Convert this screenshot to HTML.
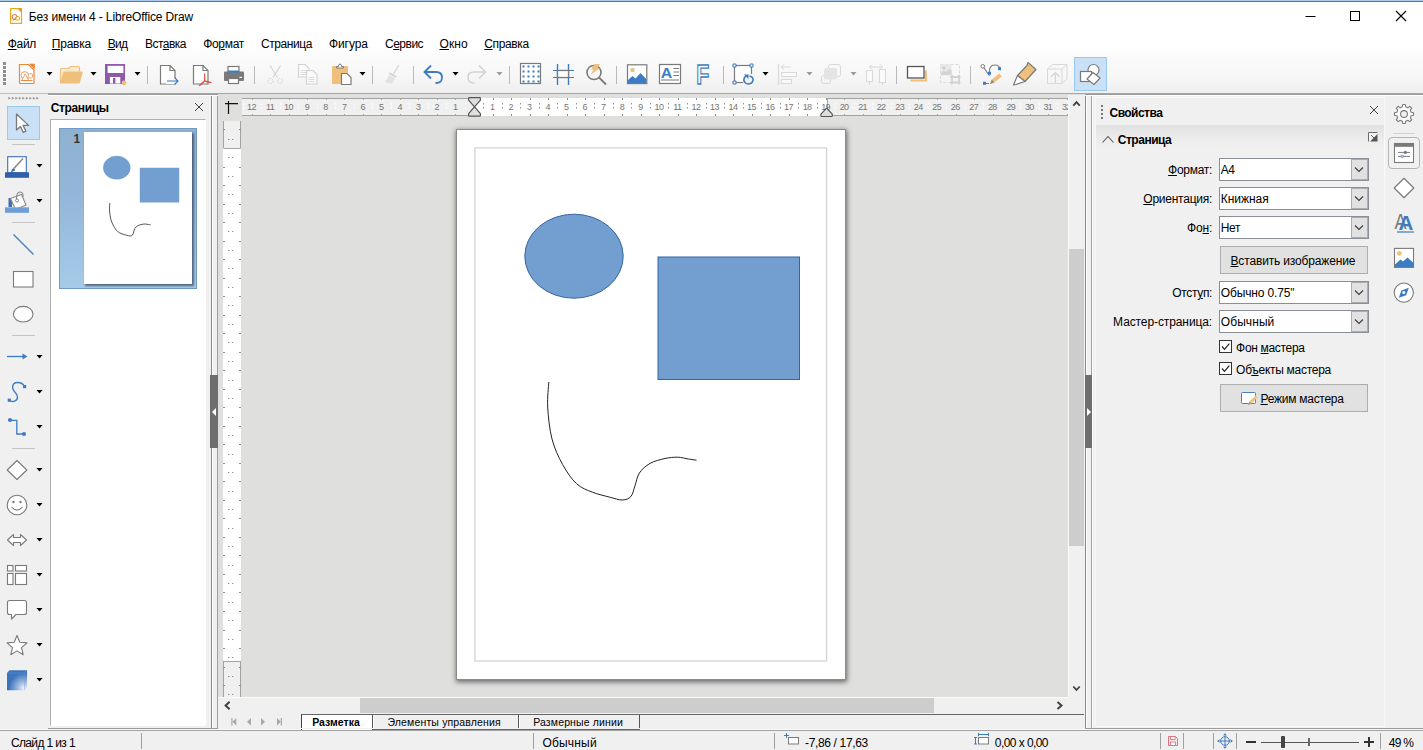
<!DOCTYPE html>
<html lang="ru"><head><meta charset="utf-8"><title>Без имени 4 - LibreOffice Draw</title>
<style>
html,body{margin:0;padding:0}
body{width:1423px;height:750px;overflow:hidden;position:relative;background:#f0f0f0;font-family:"Liberation Sans", sans-serif;font-size:12px;color:#000}
div,svg,span.t{position:absolute;box-sizing:border-box}
span.t{white-space:nowrap;display:block}
u{text-decoration:underline;text-underline-offset:1px;text-decoration-thickness:1px}
</style></head>
<body>
<div style="left:0px;top:0px;width:1423px;height:1px;background:#a9cbec"></div>
<div style="left:0px;top:1px;width:1423px;height:1px;background:#2f84d6"></div>
<div style="left:0px;top:2px;width:1423px;height:29px;background:#fff"></div>
<svg style="left:9px;top:7px" width="15" height="18" viewBox="0 0 15 18" ><path d="M1.600 1.600h7.400l3.500 3.500v11.200h-10.900z" fill="#fff" stroke="#e3ae1c" stroke-width="1.200" stroke-linejoin="round"/><path d="M8.600 1h4.400v4.400z" fill="#e3a019"/><circle cx="5.600" cy="10" r="2.500" fill="none" stroke="#e0653a" stroke-width="1"/><rect x="6.800" y="9.500" width="3.800" height="3.600" rx="1" fill="#fff" stroke="#e3ae1c" stroke-width="1"/><path d="M3.800 13.500l4.500-4" stroke="#e0653a" stroke-width=".9"/></svg>
<span class="t" id="t0" style="left:28.8px;top:10.84px;font-size:12px;line-height:12px;font-weight:400;color:#000;letter-spacing:-0.120px;">Без имени 4 - LibreOffice Draw</span>
<svg style="left:1300px;top:6px" width="120" height="22" viewBox="0 0 120 22" ><path d="M5.5 10.5h10" stroke="#000" stroke-width="1"/><rect x="50.5" y="5.5" width="9" height="9" fill="none" stroke="#000" stroke-width="1"/><path d="M96 5l10 10M106 5l-10 10" stroke="#000" stroke-width="1.1"/></svg>
<div style="left:0px;top:31px;width:1423px;height:25px;background:linear-gradient(#fff 0%,#fff 55%,#fbfbfb 100%)"></div>
<span class="t" id="t1" style="left:7.8px;top:37.84px;font-size:12px;line-height:12px;font-weight:400;color:#000;letter-spacing:-0.354px;"><u>Ф</u>айл</span>
<span class="t" id="t2" style="left:51.8px;top:37.84px;font-size:12px;line-height:12px;font-weight:400;color:#000;letter-spacing:-0.224px;"><u>П</u>равка</span>
<span class="t" id="t3" style="left:107.7px;top:37.84px;font-size:12px;line-height:12px;font-weight:400;color:#000;letter-spacing:-0.745px;"><u>В</u>ид</span>
<span class="t" id="t4" style="left:145.1px;top:37.84px;font-size:12px;line-height:12px;font-weight:400;color:#000;letter-spacing:-0.561px;">Вст<u>а</u>вка</span>
<span class="t" id="t5" style="left:203.2px;top:37.84px;font-size:12px;line-height:12px;font-weight:400;color:#000;letter-spacing:-0.323px;">Фо<u>р</u>мат</span>
<span class="t" id="t6" style="left:261.0px;top:37.84px;font-size:12px;line-height:12px;font-weight:400;color:#000;letter-spacing:-0.424px;">Страница</span>
<span class="t" id="t7" style="left:328.9px;top:37.84px;font-size:12px;line-height:12px;font-weight:400;color:#000;letter-spacing:-0.054px;">Фигура</span>
<span class="t" id="t8" style="left:385.0px;top:37.84px;font-size:12px;line-height:12px;font-weight:400;color:#000;letter-spacing:-0.504px;">С<u>е</u>рвис</span>
<span class="t" id="t9" style="left:439.5px;top:37.84px;font-size:12px;line-height:12px;font-weight:400;color:#000;letter-spacing:0.098px;"><u>О</u>кно</span>
<span class="t" id="t10" style="left:484.3px;top:37.84px;font-size:12px;line-height:12px;font-weight:400;color:#000;letter-spacing:-0.371px;"><u>С</u>правка</span>
<div style="left:0px;top:56px;width:1423px;height:37px;background:linear-gradient(#fbfbfb 0%,#f7f7f7 50%,#efefef 100%)"></div>
<div style="left:0px;top:93px;width:1423px;height:1px;background:#a6a6a6"></div>
<div style="left:0px;top:93px;width:48px;height:1px;background:#bcbcbc"></div>
<div style="left:0px;top:94px;width:1423px;height:1px;background:#dfdfde"></div>
<div style="left:0px;top:94px;width:48px;height:1px;background:#f0f0f0"></div>
<svg style="left:3px;top:62px" width="4" height="24" viewBox="0 0 4 24" ><g fill="#8e8e8e"><rect x="0" y="0" width="3" height="3"/><rect x="0" y="4" width="3" height="3"/><rect x="0" y="8" width="3" height="3"/><rect x="0" y="12" width="3" height="3"/><rect x="0" y="16" width="3" height="3"/><rect x="0" y="20" width="3" height="3"/></g></svg>
<svg style="left:18px;top:63px" width="18" height="22" viewBox="0 0 18 22" ><path d="M1.500 1.500h9l5.500 5.500v13q0 .5-.5.500h-13.500q-.5 0-.5-.5z" fill="#fff" stroke="#e8883c" stroke-width="1.200"/><path d="M11 0.800h5.800v5.800z" fill="#e8883c"/><rect x="9.500" y="10.800" width="5" height="4.200" rx="1.200" fill="#fff" stroke="#eea066" stroke-width="1"/><circle cx="6.800" cy="12.300" r="3.700" fill="#fff" stroke="#eea066" stroke-width="1"/><path d="M3.600 17.500l3.600-6.500 3.600 6.500z" fill="#fff" stroke="#eea066" stroke-width="1" stroke-linejoin="round"/><path d="M3 17.600h11.500" stroke="#e8883c" stroke-width="1"/></svg>
<svg style="left:46px;top:72px" width="7" height="4" viewBox="0 0 7 4" ><path d="M0.500 0h6l-3 3.600z" fill="#000"/></svg>
<svg style="left:59px;top:65px" width="26" height="20" viewBox="0 0 26 20" ><path d="M1.500 18v-13.500q0-1 1-1h7l2-2h8q1 0 1 1v4" fill="#fbe9cd" stroke="#efc07c" stroke-width="1.200"/><path d="M1 18.500l3.200-11q.3-1 1.300-1h17.500q1 0 .7 1l-2.700 10q-.3 1-1.300 1z" fill="#efc07c"/></svg>
<svg style="left:90px;top:72px" width="7" height="4" viewBox="0 0 7 4" ><path d="M0.500 0h6l-3 3.600z" fill="#000"/></svg>
<svg style="left:104px;top:63px" width="24" height="23" viewBox="0 0 24 23" ><path d="M1 1h20v20h-20z" fill="#8c59ae"/><rect x="3.600" y="2.800" width="15.800" height="7.200" fill="#fff"/><rect x="5.900" y="14" width="10.400" height="6.500" fill="#fff"/><rect x="9" y="15" width="2.400" height="5.500" fill="#8c59ae"/><circle cx="20" cy="20" r="2.400" fill="#efc07c"/></svg>
<svg style="left:134px;top:72px" width="7" height="4" viewBox="0 0 7 4" ><path d="M0.500 0h6l-3 3.600z" fill="#000"/></svg>
<div style="left:147px;top:66px;width:1px;height:18px;background:#b9b9b9"></div>
<svg style="left:159px;top:64px" width="21" height="22" viewBox="0 0 21 22" ><path d="M1.500 1.500h9.500l5 5v13.500h-14.500z" fill="#fff" stroke="#7a7a7a" stroke-width="1.200"/><path d="M11 1.500v5h5" fill="none" stroke="#7a7a7a" stroke-width="1.200"/><rect x="7" y="14" width="13" height="6" fill="#fbfbfb"/><path d="M8 17h11M15.500 13.500l3.500 3.500-3.500 3.500" fill="none" stroke="#3d7cc2" stroke-width="1.200"/></svg>
<svg style="left:192px;top:64px" width="21" height="22" viewBox="0 0 21 22" ><path d="M1.500 1.500h9.500l5 5v13.500h-14.500z" fill="#fff" stroke="#7a7a7a" stroke-width="1.200"/><path d="M11 1.500v5h5" fill="none" stroke="#7a7a7a" stroke-width="1.200"/><path d="M12.500 9.500q.5 5 0 7.500q3 1.500 6.500 1.500q-3.500-1-6.500-1.500q-2.500 2-5 4.500q3.500-2.500 5-4.500" fill="#f7d9d3" stroke="#d65a45" stroke-width="1.300" stroke-linejoin="round"/></svg>
<svg style="left:223px;top:65px" width="22" height="20" viewBox="0 0 22 20" ><rect x="5" y="1.500" width="11" height="6" fill="#fff" stroke="#7a7a7a" stroke-width="1.200"/><rect x="1" y="6.500" width="20" height="9.500" rx="1" fill="#7a7a7a"/><rect x="5" y="5.500" width="11" height="2" fill="#3d7cc2"/><rect x="5.500" y="13.500" width="10" height="5" fill="#fff" stroke="#7a7a7a" stroke-width="1.200"/><rect x="16.500" y="11.800" width="2.500" height="1.200" fill="#fff"/></svg>
<div style="left:254px;top:66px;width:1px;height:18px;background:#b9b9b9"></div>
<svg style="left:265px;top:64px" width="21" height="22" viewBox="0 0 21 22" ><path d="M5 1.500l7.500 12M15.500 1.500l-7.500 12" stroke="#d2d2d2" stroke-width="1.100" fill="none"/><circle cx="5.500" cy="17" r="2.500" fill="none" stroke="#d2d2d2" stroke-width="1" stroke-dasharray="1.500 1"/><circle cx="15" cy="17" r="2.500" fill="none" stroke="#d2d2d2" stroke-width="1" stroke-dasharray="1.500 1"/></svg>
<svg style="left:297px;top:63px" width="23" height="23" viewBox="0 0 23 23" ><path d="M1.500 1.500h6.500l4 4v8.500h-10.500z" fill="#fbfbfb" stroke="#d2d2d2" stroke-width="1.100"/><path d="M3.500 7.500h6M3.500 9.500h6M3.500 11.500h6" stroke="#dcdcdc" stroke-width="1"/><path d="M9.500 7.500h6.500l4 4v9.500h-10.500z" fill="#fbfbfb" stroke="#d2d2d2" stroke-width="1.100"/><path d="M11.500 14.500h6M11.500 16.500h6M11.500 18.500h6" stroke="#dcdcdc" stroke-width="1"/></svg>
<svg style="left:331px;top:63px" width="22" height="23" viewBox="0 0 22 23" ><rect x="1" y="3" width="16" height="18" rx="1" fill="#efc07c"/><path d="M5.500 5v-1.500h2q0-2.500 1.500-2.500t1.500 2.500h2v1.500z" fill="#fff" stroke="#7a7a7a" stroke-width="1"/><path d="M10.500 10.500h5.500l4 4v7h-9.500z" fill="#fff" stroke="#7a7a7a" stroke-width="1.200"/></svg>
<svg style="left:359px;top:72px" width="7" height="4" viewBox="0 0 7 4" ><path d="M0.500 0h6l-3 3.600z" fill="#000"/></svg>
<div style="left:372px;top:66px;width:1px;height:18px;background:#b9b9b9"></div>
<svg style="left:383px;top:63px" width="20" height="23" viewBox="0 0 20 23" ><path d="M16 2l-5.500 9" stroke="#d2d2d2" stroke-width="1.200"/><path d="M6.500 10l6.500 4" stroke="#d2d2d2" stroke-width="1.600"/><path d="M6 11.500l6 3.800-2.500 5q-4 .8-8-1.800 3-2.500 4.500-7z" fill="#e3e3e3"/></svg>
<div style="left:413px;top:66px;width:1px;height:18px;background:#b9b9b9"></div>
<svg style="left:422px;top:63px" width="23" height="23" viewBox="0 0 23 23" ><path d="M9 2.500l-6.500 6.500 6.500 6.500M2.500 9h11.500q6 0 6 5.500t-6 5.500h-.5" fill="none" stroke="#3d7cc2" stroke-width="1.800"/></svg>
<svg style="left:452px;top:72px" width="7" height="4" viewBox="0 0 7 4" ><path d="M0.500 0h6l-3 3.600z" fill="#000"/></svg>
<svg style="left:465px;top:63px" width="23" height="23" viewBox="0 0 23 23" ><path d="M14 2.500l6.500 6.500-6.500 6.500M20.500 9h-11.500q-6 0-6 5.500t6 5.500h.5" fill="none" stroke="#d2d2d2" stroke-width="1.500"/></svg>
<svg style="left:496px;top:72px" width="7" height="4" viewBox="0 0 7 4" ><path d="M0.500 0h6l-3 3.600z" fill="#9a9a9a"/></svg>
<div style="left:509px;top:66px;width:1px;height:18px;background:#b9b9b9"></div>
<svg style="left:519px;top:62px" width="23" height="23" viewBox="0 0 23 23" ><rect x="1.500" y="1.500" width="20" height="20" fill="#fff" stroke="#7a7a7a" stroke-width="1.200"/><g fill="#3d7cc2"><rect x="3.5" y="3.5" width="2" height="2"/><rect x="3.5" y="8.5" width="2" height="2"/><rect x="3.5" y="13.5" width="2" height="2"/><rect x="3.5" y="18.5" width="2" height="2"/><rect x="8.5" y="3.5" width="2" height="2"/><rect x="8.5" y="8.5" width="2" height="2"/><rect x="8.5" y="13.5" width="2" height="2"/><rect x="8.5" y="18.5" width="2" height="2"/><rect x="13.5" y="3.5" width="2" height="2"/><rect x="13.5" y="8.5" width="2" height="2"/><rect x="13.5" y="13.5" width="2" height="2"/><rect x="13.5" y="18.5" width="2" height="2"/><rect x="18.5" y="3.5" width="2" height="2"/><rect x="18.5" y="8.5" width="2" height="2"/><rect x="18.5" y="13.5" width="2" height="2"/><rect x="18.5" y="18.5" width="2" height="2"/></g></svg>
<svg style="left:552px;top:63px" width="23" height="23" viewBox="0 0 23 23" ><rect x="5.500" y="7.500" width="11" height="7" fill="#fff" stroke="#7a7a7a" stroke-width="1.200"/><path d="M5.500 1v21M16.500 1v21M1 7.500h21M1 14.500h21" stroke="#3d7cc2" stroke-width="1.200" fill="none"/><rect x="6.200" y="8.200" width="9.600" height="5.600" fill="#fff"/><rect x="5.500" y="7.500" width="11" height="7" fill="none" stroke="#7a7a7a" stroke-width="1.200"/><path d="M5.500 1v6M5.500 15v7M16.500 1v6M16.500 15v7M1 7.500h4M17 7.500h5M1 14.500h4M17 14.500h5" stroke="#3d7cc2" stroke-width="1.200"/></svg>
<svg style="left:585px;top:63px" width="23" height="23" viewBox="0 0 23 23" ><circle cx="9" cy="9.500" r="7" fill="none" stroke="#7a7a7a" stroke-width="1.600"/><path d="M14 14.500l7 7" stroke="#7a7a7a" stroke-width="1.800"/><path d="M9.500 1h5.500l-3 4h3l-9.500 7 3-5.500h-2.500z" fill="#efc07c"/></svg>
<div style="left:616px;top:66px;width:1px;height:18px;background:#b9b9b9"></div>
<svg style="left:626px;top:63px" width="23" height="23" viewBox="0 0 23 23" ><rect x="1.500" y="1.800" width="19.300" height="18.800" fill="#fff" stroke="#7a7a7a" stroke-width="1.200"/><circle cx="6.500" cy="7" r="2.200" fill="#efc07c"/><path d="M2 20v-3l4.500-4 3 2.500 5-5.500 5.800 6v4z" fill="#3d7cc2"/></svg>
<svg style="left:658px;top:63px" width="25" height="23" viewBox="0 0 25 23" ><rect x="1.500" y="1.500" width="21" height="19" fill="#fff" stroke="#7a7a7a" stroke-width="1.200"/><text x="2.800" y="14.600" font-family="Liberation Sans, sans-serif" font-size="15.500" font-weight="700" fill="#3d7cc2" textLength="11.500" lengthAdjust="spacingAndGlyphs">A</text><path d="M15.500 5.500h5.500M15.500 9h5.500M15.500 12.500h5.500M3 17h18" stroke="#7a7a7a" stroke-width="1.100"/></svg>
<svg style="left:696px;top:63px" width="15" height="23" viewBox="0 0 15 23" ><text x="0.300" y="21" font-family="Liberation Sans, sans-serif" font-size="27.500" font-weight="700" fill="#fff" stroke="#3d7cc2" stroke-width="1.300" textLength="13" lengthAdjust="spacingAndGlyphs">F</text></svg>
<div style="left:723px;top:66px;width:1px;height:18px;background:#b9b9b9"></div>
<svg style="left:732px;top:63px" width="24" height="24" viewBox="0 0 24 24" ><rect x="2.500" y="2.500" width="17" height="17" fill="#fff" stroke="#7a7a7a" stroke-width="1.200"/><rect x="11" y="11" width="12" height="12" fill="#f5f5f5"/><g fill="#fff" stroke="#3d7cc2" stroke-width="1.100"><rect x="1" y="1" width="3" height="3" rx=".8"/><rect x="18" y="1" width="3" height="3" rx=".8"/><rect x="1" y="18" width="3" height="3" rx=".8"/></g><path d="M14 13l-1.500 1.500q-1.500 3 .5 5t4.800 1.300 3.200-3.800-3.500-4" fill="none" stroke="#3d7cc2" stroke-width="1.600"/><path d="M12 11.500h4.500v4.500z" fill="#3d7cc2"/></svg>
<svg style="left:762px;top:72px" width="7" height="4" viewBox="0 0 7 4" ><path d="M0.500 0h6l-3 3.600z" fill="#000"/></svg>
<svg style="left:777px;top:63px" width="22" height="23" viewBox="0 0 22 23" ><path d="M1.500 1v21" stroke="#d8d8d8" stroke-width="1.100"/><path d="M4 4h10M7 1.500l-3 2.500 3 2.500" stroke="#d8d8d8" stroke-width="1" fill="none"/><rect x="4.500" y="9.500" width="15" height="4" fill="#fafafa" stroke="#d8d8d8" stroke-width="1"/><rect x="4.500" y="16.500" width="10" height="4" fill="#fafafa" stroke="#d8d8d8" stroke-width="1"/></svg>
<svg style="left:806px;top:72px" width="7" height="4" viewBox="0 0 7 4" ><path d="M0.500 0h6l-3 3.600z" fill="#9a9a9a"/></svg>
<svg style="left:820px;top:63px" width="23" height="23" viewBox="0 0 23 23" ><rect x="8.500" y="1.500" width="12" height="12" rx="2" fill="none" stroke="#d8d8d8" stroke-width="1"/><rect x="1.500" y="12.500" width="9" height="8" rx="2" fill="none" stroke="#d8d8d8" stroke-width="1"/><rect x="4" y="5" width="13" height="11.500" rx="2" fill="#e4e4e4"/></svg>
<svg style="left:850px;top:72px" width="7" height="4" viewBox="0 0 7 4" ><path d="M0.500 0h6l-3 3.600z" fill="#9a9a9a"/></svg>
<svg style="left:865px;top:63px" width="23" height="23" viewBox="0 0 23 23" ><path d="M4.500 4h13M7 1.500l-2.500 2.500 2.500 2.500M15 1.500l2.500 2.500-2.500 2.500" stroke="#d8d8d8" stroke-width="1" fill="none"/><rect x="1.500" y="7.500" width="6" height="11" fill="#fafafa" stroke="#d8d8d8" stroke-width="1"/><rect x="14.500" y="6.500" width="6" height="13" fill="#fafafa" stroke="#d8d8d8" stroke-width="1"/><path d="M4.500 18.500v3.500M17.500 19.500v2.500" stroke="#d8d8d8" stroke-width="1"/></svg>
<div style="left:896px;top:66px;width:1px;height:18px;background:#b9b9b9"></div>
<svg style="left:906px;top:65px" width="23" height="18" viewBox="0 0 23 18" ><path d="M20 5.500v10h-15.500" fill="none" stroke="#efc07c" stroke-width="2"/><rect x="1.500" y="1.500" width="16.500" height="11.500" fill="#fff" stroke="#555" stroke-width="1.300"/></svg>
<svg style="left:939px;top:63px" width="24" height="23" viewBox="0 0 24 23" ><rect x="1.500" y="1.500" width="19" height="18" fill="none" stroke="#d8d8d8" stroke-width="1" stroke-dasharray="3 2"/><rect x="1.500" y="1.500" width="11" height="11" fill="#e9e9e9"/><circle cx="5" cy="5" r="1.800" fill="#d0d0d0"/><path d="M2 12v-2l3-2.500 2 1.500 3.500-3.500 2 2v4.500z" fill="#d4d4d4"/><path d="M13 12v9.500M11 14h10.500M20 12v9.500M11 19.500h10.500" stroke="#d2d2d2" stroke-width="1.800" fill="none"/></svg>
<div style="left:970px;top:66px;width:1px;height:18px;background:#b9b9b9"></div>
<svg style="left:980px;top:63px" width="23" height="23" viewBox="0 0 23 23" ><path d="M2.800 3.300l6.700 9.500M4 20.500h5" stroke="#7a7a7a" stroke-width="1.100" fill="none"/><path d="M9.500 10q-.5-8 5-8t5.500 5" stroke="#7a7a7a" stroke-width="1.200" fill="none"/><circle cx="2.800" cy="3.300" r="1.800" fill="#fff" stroke="#7a7a7a" stroke-width="1"/><rect x="8" y="8.800" width="3" height="3" fill="#3d7cc2"/><rect x="18" y="4.200" width="3" height="3" fill="#3d7cc2"/><rect x="3" y="18.800" width="3" height="3" fill="#3d7cc2"/><path d="M10 21l1.800-4.500 7.500-6 2.500 3-7.500 6z" fill="#efc07c"/><path d="M10 21l1.800-4.500 2.500 3z" fill="#8a8a8a"/></svg>
<svg style="left:1012px;top:61px" width="26" height="25" viewBox="0 0 26 25" ><path d="M16 1.500l8 7-11 12-7.500-6 9.500-10z" fill="#efc07c" stroke="#7a7a7a" stroke-width="1.200" stroke-linejoin="round"/><path d="M5.500 14.500l7.500 6-9 3-2.500 .5z" fill="#fff" stroke="#7a7a7a" stroke-width="1.200" stroke-linejoin="round"/></svg>
<svg style="left:1046px;top:63px" width="23" height="23" viewBox="0 0 23 23" ><path d="M1.500 6h14.500v14.500h-14.500zM1.500 6l5-4.500h14.500l-5 4.500M21 1.500v14.500l-5 4.500" fill="none" stroke="#d8d8d8" stroke-width="1"/><path d="M9.300 20v-10.500M4.800 14l4.500-4.500 4.500 4.500" stroke="#d8d8d8" stroke-width="1.500" fill="none"/></svg>
<div style="left:1074px;top:57px;width:33px;height:34px;background:#c9e0f6;border:1px solid #98c9f2"></div>
<svg style="left:1079px;top:63px" width="23" height="23" viewBox="0 0 23 23" ><circle cx="14.500" cy="7" r="5.500" fill="#fff" stroke="#7a7a7a" stroke-width="1.200"/><rect x="1.500" y="8.500" width="11" height="10" fill="#fff" stroke="#7a7a7a" stroke-width="1.200"/><path d="M14 9.500l7 5.500-6 6.500-7-5.500z" fill="#fff" stroke="#7a7a7a" stroke-width="1.200" stroke-linejoin="round"/></svg>
<div style="left:0px;top:95px;width:219px;height:635px;background:#f0f0f0"></div>
<svg style="left:8px;top:96px" width="32" height="5" viewBox="0 0 32 5" ><g fill="#9a9a9a"><path d="M0.3 0.800l2.600 1.500-2.600 1.500z"/><path d="M3.8 0.800l2.600 1.500-2.600 1.500z"/><path d="M7.3 0.800l2.600 1.500-2.600 1.500z"/><path d="M10.8 0.800l2.600 1.500-2.600 1.500z"/><path d="M14.3 0.800l2.600 1.500-2.600 1.500z"/><path d="M17.8 0.800l2.600 1.500-2.600 1.500z"/><path d="M21.3 0.800l2.600 1.500-2.600 1.500z"/><path d="M24.8 0.800l2.600 1.500-2.600 1.500z"/><path d="M28.3 0.800l2.600 1.500-2.600 1.500z"/></g></svg>
<div style="left:7px;top:106px;width:33px;height:34px;background:#c9e0f6;border:1px solid #98c9f2"></div>
<svg style="left:14px;top:112px" width="18" height="23" viewBox="0 0 18 23" ><path d="M2.500 2l0 16 4-3.600 2.800 6 2.600-1.200-2.800-5.800 5.500 0z" fill="#fff" stroke="#7a7a7a" stroke-width="1.300" stroke-linejoin="round"/></svg>
<div style="left:12px;top:144px;width:23px;height:1px;background:#c4c4c4"></div>
<svg style="left:4px;top:155px" width="27" height="24" viewBox="0 0 27 24" ><rect x="3.700" y="1.700" width="18.600" height="16" fill="#fff" stroke="#3d6fb6" stroke-width="1.100"/><path d="M19 3.500l-10.500 11.500" stroke="#8a8a8a" stroke-width="1.600"/><path d="M7 17.500l1-3.500 2.500 0 .5 1.500z" fill="#3d6fb6"/><rect x="1" y="17.300" width="24" height="5.500" fill="#2f60a8"/></svg>
<svg style="left:35.8px;top:164px" width="7" height="4" viewBox="0 0 7 4" ><path d="M0.500 0h6l-3 3.600z" fill="#000"/></svg>
<svg style="left:4px;top:190px" width="27" height="24" viewBox="0 0 27 24" ><path d="M4.500 8h3.500v9h-3.500z" fill="#3d6fb6"/><path d="M6.500 8.500l11-4 4.500 10.500-10.500 4.500z" fill="#fff" stroke="#8a8a8a" stroke-width="1.100" stroke-linejoin="round"/><path d="M12.500 9q0-7 3.500-7t3 5" fill="none" stroke="#8a8a8a" stroke-width="1.100"/><circle cx="13" cy="10.500" r="1.500" fill="#fff" stroke="#8a8a8a" stroke-width="1"/><rect x="1" y="17.300" width="24" height="5.500" fill="#6f9ed6"/></svg>
<svg style="left:35.8px;top:199px" width="7" height="4" viewBox="0 0 7 4" ><path d="M0.500 0h6l-3 3.600z" fill="#000"/></svg>
<div style="left:12px;top:222px;width:23px;height:1px;background:#c4c4c4"></div>
<svg style="left:12px;top:233px" width="23" height="23" viewBox="0 0 23 23" ><path d="M1.500 1.500l20 20" stroke="#3d7cc2" stroke-width="1.300"/></svg>
<svg style="left:12px;top:270px" width="23" height="19" viewBox="0 0 23 19" ><rect x="1.500" y="1.500" width="19.500" height="15.500" fill="#fff" stroke="#7a7a7a" stroke-width="1.100"/></svg>
<svg style="left:12px;top:305px" width="23" height="19" viewBox="0 0 23 19" ><ellipse cx="11.200" cy="9.200" rx="9.800" ry="7.800" fill="#fff" stroke="#7a7a7a" stroke-width="1.100"/></svg>
<div style="left:12px;top:335px;width:23px;height:1px;background:#c4c4c4"></div>
<svg style="left:6px;top:350px" width="23" height="12" viewBox="0 0 23 12" ><path d="M1 6.500h18" stroke="#3d7cc2" stroke-width="1.300"/><path d="M16.500 3.500l5 3-5 3z" fill="#3d7cc2"/></svg>
<svg style="left:35.8px;top:355px" width="7" height="4" viewBox="0 0 7 4" ><path d="M0.500 0h6l-3 3.600z" fill="#000"/></svg>
<svg style="left:6px;top:380px" width="23" height="24" viewBox="0 0 23 24" ><path d="M18.500 6.500C16 1.500 6.600 0.500 6.600 7.600C6.600 12 11.500 12.500 11.500 17C11.500 21.500 6.500 22.500 3.300 20.500" fill="none" stroke="#3d7cc2" stroke-width="1.400"/><rect x="17" y="5" width="3.200" height="3.200" fill="#3d7cc2"/><rect x="1.700" y="18.600" width="3.200" height="3.200" fill="#3d7cc2"/></svg>
<svg style="left:35.8px;top:390px" width="7" height="4" viewBox="0 0 7 4" ><path d="M0.500 0h6l-3 3.600z" fill="#000"/></svg>
<svg style="left:6px;top:415px" width="23" height="24" viewBox="0 0 23 24" ><path d="M4 5.400h6.800v13.600h7.200" fill="none" stroke="#3d7cc2" stroke-width="1.300"/><circle cx="4" cy="5" r="2.100" fill="#3d7cc2"/><circle cx="18" cy="19" r="2.100" fill="#3d7cc2"/></svg>
<svg style="left:35.8px;top:425px" width="7" height="4" viewBox="0 0 7 4" ><path d="M0.500 0h6l-3 3.600z" fill="#000"/></svg>
<div style="left:12px;top:448px;width:23px;height:1px;background:#c4c4c4"></div>
<svg style="left:6px;top:459px" width="23" height="23" viewBox="0 0 23 23" ><path d="M11 1.500l9.800 9.500-9.800 9.500-9.800-9.500z" fill="#fff" stroke="#7a7a7a" stroke-width="1.100" stroke-linejoin="round"/></svg>
<svg style="left:35.8px;top:468px" width="7" height="4" viewBox="0 0 7 4" ><path d="M0.500 0h6l-3 3.600z" fill="#000"/></svg>
<svg style="left:6px;top:494px" width="23" height="23" viewBox="0 0 23 23" ><circle cx="11" cy="11" r="9.800" fill="#fff" stroke="#7a7a7a" stroke-width="1.100"/><circle cx="7.500" cy="8" r="1.200" fill="#7a7a7a"/><circle cx="14.500" cy="8" r="1.200" fill="#7a7a7a"/><path d="M5.500 13q5.500 6 11 0" fill="none" stroke="#7a7a7a" stroke-width="1.100"/></svg>
<svg style="left:35.8px;top:503px" width="7" height="4" viewBox="0 0 7 4" ><path d="M0.500 0h6l-3 3.600z" fill="#000"/></svg>
<svg style="left:6px;top:532px" width="23" height="16" viewBox="0 0 23 16" ><path d="M1.500 8l6-5.500v3h7v-3l6 5.500-6 5.500v-3h-7v3z" fill="#fff" stroke="#7a7a7a" stroke-width="1.100" stroke-linejoin="round"/></svg>
<svg style="left:35.8px;top:538px" width="7" height="4" viewBox="0 0 7 4" ><path d="M0.500 0h6l-3 3.600z" fill="#000"/></svg>
<svg style="left:6px;top:564px" width="23" height="23" viewBox="0 0 23 23" ><g fill="#fff" stroke="#7a7a7a" stroke-width="1.100"><rect x="1.500" y="1.500" width="5.500" height="5.500"/><rect x="9.500" y="1.500" width="11" height="5.500"/><rect x="1.500" y="9.500" width="5.500" height="11"/><rect x="9.500" y="9.500" width="11" height="11"/></g></svg>
<svg style="left:35.8px;top:573px" width="7" height="4" viewBox="0 0 7 4" ><path d="M0.500 0h6l-3 3.600z" fill="#000"/></svg>
<svg style="left:6px;top:599px" width="23" height="23" viewBox="0 0 23 23" ><path d="M3.500 1.500h15q2 0 2 2v10q0 2-2 2h-8.500l-4.500 4.500v-4.500h-2q-2 0-2-2v-10q0-2 2-2z" fill="#fff" stroke="#7a7a7a" stroke-width="1.100" stroke-linejoin="round"/></svg>
<svg style="left:35.8px;top:608px" width="7" height="4" viewBox="0 0 7 4" ><path d="M0.500 0h6l-3 3.600z" fill="#000"/></svg>
<svg style="left:6px;top:634px" width="23" height="23" viewBox="0 0 23 23" ><path d="M11 1.500l2.800 6.800 7.200.6-5.500 4.800 1.700 7-6.200-3.800-6.200 3.800 1.700-7-5.500-4.800 7.200-.6z" fill="#fff" stroke="#7a7a7a" stroke-width="1.100" stroke-linejoin="round"/></svg>
<svg style="left:35.8px;top:643px" width="7" height="4" viewBox="0 0 7 4" ><path d="M0.500 0h6l-3 3.600z" fill="#000"/></svg>
<svg style="left:6px;top:669px" width="23" height="23" viewBox="0 0 23 23" ><defs><radialGradient id="cg" cx="0.850" cy="0.900" r="0.750"><stop offset="0" stop-color="#f4f6fa"/><stop offset="0.350" stop-color="#a9c2e2"/><stop offset="1" stop-color="#3d75bd"/></radialGradient></defs><path d="M1 4l2.500-2.800h17.500v17.300l-2.500 2.800h-17.500z" fill="url(#cg)"/><path d="M1 4h17.500l2.500-2.800M18.500 4v17" stroke="#6f9ad0" stroke-width=".6" fill="none" opacity=".7"/></svg>
<svg style="left:35.8px;top:678px" width="7" height="4" viewBox="0 0 7 4" ><path d="M0.500 0h6l-3 3.600z" fill="#000"/></svg>
<span class="t" id="t11" style="left:50.8px;top:101.54px;font-size:12px;line-height:12px;font-weight:700;color:#000;letter-spacing:-0.375px;">Страницы</span>
<svg style="left:194px;top:102px" width="10" height="10" viewBox="0 0 10 10" ><path d="M1 1l8 8M9 1l-8 8" stroke="#444" stroke-width="1"/></svg>
<div style="left:50px;top:119px;width:156px;height:607px;background:#fff;border:1px solid #fff;border-top-color:#b0b0b0;border-left-color:#b0b0b0"></div>
<div style="left:59px;top:128px;width:138px;height:161px;background:linear-gradient(#8fb1d1 0%,#93b6d8 40%,#a6cbe9 100%);border:1px solid #6f9bc6"></div>
<div style="left:84px;top:132px;width:108px;height:152px;background:#fff;box-shadow:1px 1px 2px 0.500px rgba(40,50,70,.65)"></div>
<span class="t" id="t12" style="left:73.5px;top:133.34px;font-size:12px;line-height:12px;font-weight:700;color:#333;letter-spacing:-1.200px;">1</span>
<svg style="left:84px;top:132px" width="109" height="153" viewBox="0 0 109 153" ><g transform="translate(0.5,0.4) scale(0.276,0.28)"><g transform="translate(-457,-130)"><ellipse cx="574" cy="256" rx="49.2" ry="41.7" fill="#729fcf" stroke="#6a97cb" stroke-width="1"/><rect x="658" y="257" width="141.500" height="122.500" fill="#729fcf" stroke="#6a97cb" stroke-width="1"/><path d="M548.8 382.0C548.6 386.2 547.2 397.5 547.7 407.0C548.2 416.5 549.5 429.4 552.0 439.0C554.5 448.6 558.5 457.1 562.6 464.5C566.7 471.9 571.5 479.1 576.5 483.7C581.5 488.3 587.0 490.0 592.5 492.2C598.0 494.4 604.5 495.8 609.5 497.1C614.5 498.4 618.7 500.1 622.3 500.0C625.9 499.9 628.8 498.9 630.9 496.5C633.0 494.1 633.6 489.7 635.0 485.8C636.4 481.9 636.9 476.7 639.4 473.0C641.9 469.3 645.7 465.8 650.0 463.4C654.3 461.0 660.4 459.5 665.0 458.5C669.6 457.5 673.9 457.1 677.8 457.2C681.7 457.3 685.3 458.5 688.4 459.0C691.5 459.5 695.1 460.0 696.5 460.2" fill="none" stroke="#333" stroke-width="3"/></g></g></svg>
<div style="left:211px;top:96px;width:1px;height:632px;background:#8a8a8a"></div>
<div style="left:212px;top:95px;width:5px;height:633px;background:#f0f0f0"></div>
<div style="left:212px;top:95px;width:1px;height:633px;background:#fff"></div>
<div style="left:217px;top:96px;width:1px;height:632px;background:#a0a0a0"></div>
<div style="left:210px;top:375px;width:8px;height:73px;background:#6e6e6e"></div>
<svg style="left:210px;top:405.5px" width="8" height="12" viewBox="0 0 8 12" ><path d="M6 2v8l-4-4z" fill="#fff"/></svg>
<div style="left:218px;top:95px;width:850px;height:602px;background:#dfdfde"></div>
<svg style="left:224px;top:100px" width="16" height="16" viewBox="0 0 16 16" ><path d="M1 3.600h13M4.500 1v13" stroke="#111" stroke-width="1.200" fill="none"/></svg>
<div style="left:242px;top:98px;width:233px;height:18px;background:#f0f0f0;border-top:1px solid #a3a3a3;border-bottom:1px solid #a3a3a3"></div>
<div style="left:475px;top:98px;width:352px;height:18px;background:#fff"></div>
<div style="left:827px;top:98px;width:241px;height:18px;background:#f0f0f0;border-top:1px solid #a3a3a3;border-bottom:1px solid #a3a3a3;border-left:1px solid #a3a3a3"></div>
<svg style="left:242px;top:98px" width="826" height="18" viewBox="0 0 826 18" ><rect x="1" y="5" width="1" height="2" fill="#ffffff"/><rect x="1" y="9" width="1" height="2" fill="#ffffff"/><rect x="10" y="0" width="1" height="2" fill="#a3a3a3"/><rect x="10" y="16" width="1" height="2" fill="#a3a3a3"/><rect x="19" y="5" width="1" height="2" fill="#ffffff"/><rect x="19" y="9" width="1" height="2" fill="#ffffff"/><rect x="28" y="0" width="1" height="2" fill="#a3a3a3"/><rect x="28" y="16" width="1" height="2" fill="#a3a3a3"/><rect x="38" y="5" width="1" height="2" fill="#ffffff"/><rect x="38" y="9" width="1" height="2" fill="#ffffff"/><rect x="47" y="0" width="1" height="2" fill="#a3a3a3"/><rect x="47" y="16" width="1" height="2" fill="#a3a3a3"/><rect x="56" y="5" width="1" height="2" fill="#ffffff"/><rect x="56" y="9" width="1" height="2" fill="#ffffff"/><rect x="65" y="0" width="1" height="2" fill="#a3a3a3"/><rect x="65" y="16" width="1" height="2" fill="#a3a3a3"/><rect x="75" y="5" width="1" height="2" fill="#ffffff"/><rect x="75" y="9" width="1" height="2" fill="#ffffff"/><rect x="84" y="0" width="1" height="2" fill="#a3a3a3"/><rect x="84" y="16" width="1" height="2" fill="#a3a3a3"/><rect x="93" y="5" width="1" height="2" fill="#ffffff"/><rect x="93" y="9" width="1" height="2" fill="#ffffff"/><rect x="102" y="0" width="1" height="2" fill="#a3a3a3"/><rect x="102" y="16" width="1" height="2" fill="#a3a3a3"/><rect x="112" y="5" width="1" height="2" fill="#ffffff"/><rect x="112" y="9" width="1" height="2" fill="#ffffff"/><rect x="121" y="0" width="1" height="2" fill="#a3a3a3"/><rect x="121" y="16" width="1" height="2" fill="#a3a3a3"/><rect x="130" y="5" width="1" height="2" fill="#ffffff"/><rect x="130" y="9" width="1" height="2" fill="#ffffff"/><rect x="139" y="0" width="1" height="2" fill="#a3a3a3"/><rect x="139" y="16" width="1" height="2" fill="#a3a3a3"/><rect x="149" y="5" width="1" height="2" fill="#ffffff"/><rect x="149" y="9" width="1" height="2" fill="#ffffff"/><rect x="158" y="0" width="1" height="2" fill="#a3a3a3"/><rect x="158" y="16" width="1" height="2" fill="#a3a3a3"/><rect x="167" y="5" width="1" height="2" fill="#ffffff"/><rect x="167" y="9" width="1" height="2" fill="#ffffff"/><rect x="176" y="0" width="1" height="2" fill="#a3a3a3"/><rect x="176" y="16" width="1" height="2" fill="#a3a3a3"/><rect x="186" y="5" width="1" height="2" fill="#ffffff"/><rect x="186" y="9" width="1" height="2" fill="#ffffff"/><rect x="195" y="0" width="1" height="2" fill="#a3a3a3"/><rect x="195" y="16" width="1" height="2" fill="#a3a3a3"/><rect x="204" y="5" width="1" height="2" fill="#ffffff"/><rect x="204" y="9" width="1" height="2" fill="#ffffff"/><rect x="213" y="0" width="1" height="2" fill="#a3a3a3"/><rect x="213" y="16" width="1" height="2" fill="#a3a3a3"/><rect x="223" y="5" width="1" height="2" fill="#ffffff"/><rect x="223" y="9" width="1" height="2" fill="#ffffff"/><rect x="241" y="5" width="1" height="1.5" fill="#909090"/><rect x="241" y="9" width="1" height="1.5" fill="#909090"/><rect x="251" y="0" width="1" height="2" fill="#8c8c8c"/><rect x="251" y="16" width="1" height="2" fill="#8c8c8c"/><rect x="260" y="5" width="1" height="1.5" fill="#909090"/><rect x="260" y="9" width="1" height="1.5" fill="#909090"/><rect x="269" y="0" width="1" height="2" fill="#8c8c8c"/><rect x="269" y="16" width="1" height="2" fill="#8c8c8c"/><rect x="278" y="5" width="1" height="1.5" fill="#909090"/><rect x="278" y="9" width="1" height="1.5" fill="#909090"/><rect x="288" y="0" width="1" height="2" fill="#8c8c8c"/><rect x="288" y="16" width="1" height="2" fill="#8c8c8c"/><rect x="297" y="5" width="1" height="1.5" fill="#909090"/><rect x="297" y="9" width="1" height="1.5" fill="#909090"/><rect x="306" y="0" width="1" height="2" fill="#8c8c8c"/><rect x="306" y="16" width="1" height="2" fill="#8c8c8c"/><rect x="315" y="5" width="1" height="1.5" fill="#909090"/><rect x="315" y="9" width="1" height="1.5" fill="#909090"/><rect x="325" y="0" width="1" height="2" fill="#8c8c8c"/><rect x="325" y="16" width="1" height="2" fill="#8c8c8c"/><rect x="334" y="5" width="1" height="1.5" fill="#909090"/><rect x="334" y="9" width="1" height="1.5" fill="#909090"/><rect x="343" y="0" width="1" height="2" fill="#8c8c8c"/><rect x="343" y="16" width="1" height="2" fill="#8c8c8c"/><rect x="352" y="5" width="1" height="1.5" fill="#909090"/><rect x="352" y="9" width="1" height="1.5" fill="#909090"/><rect x="362" y="0" width="1" height="2" fill="#8c8c8c"/><rect x="362" y="16" width="1" height="2" fill="#8c8c8c"/><rect x="371" y="5" width="1" height="1.5" fill="#909090"/><rect x="371" y="9" width="1" height="1.5" fill="#909090"/><rect x="380" y="0" width="1" height="2" fill="#8c8c8c"/><rect x="380" y="16" width="1" height="2" fill="#8c8c8c"/><rect x="389" y="5" width="1" height="1.5" fill="#909090"/><rect x="389" y="9" width="1" height="1.5" fill="#909090"/><rect x="399" y="0" width="1" height="2" fill="#8c8c8c"/><rect x="399" y="16" width="1" height="2" fill="#8c8c8c"/><rect x="408" y="5" width="1" height="1.5" fill="#909090"/><rect x="408" y="9" width="1" height="1.5" fill="#909090"/><rect x="417" y="0" width="1" height="2" fill="#8c8c8c"/><rect x="417" y="16" width="1" height="2" fill="#8c8c8c"/><rect x="426" y="5" width="1" height="1.5" fill="#909090"/><rect x="426" y="9" width="1" height="1.5" fill="#909090"/><rect x="436" y="0" width="1" height="2" fill="#8c8c8c"/><rect x="436" y="16" width="1" height="2" fill="#8c8c8c"/><rect x="445" y="5" width="1" height="1.5" fill="#909090"/><rect x="445" y="9" width="1" height="1.5" fill="#909090"/><rect x="454" y="0" width="1" height="2" fill="#8c8c8c"/><rect x="454" y="16" width="1" height="2" fill="#8c8c8c"/><rect x="464" y="5" width="1" height="1.5" fill="#909090"/><rect x="464" y="9" width="1" height="1.5" fill="#909090"/><rect x="473" y="0" width="1" height="2" fill="#8c8c8c"/><rect x="473" y="16" width="1" height="2" fill="#8c8c8c"/><rect x="482" y="5" width="1" height="1.5" fill="#909090"/><rect x="482" y="9" width="1" height="1.5" fill="#909090"/><rect x="491" y="0" width="1" height="2" fill="#8c8c8c"/><rect x="491" y="16" width="1" height="2" fill="#8c8c8c"/><rect x="501" y="5" width="1" height="1.5" fill="#909090"/><rect x="501" y="9" width="1" height="1.5" fill="#909090"/><rect x="510" y="0" width="1" height="2" fill="#8c8c8c"/><rect x="510" y="16" width="1" height="2" fill="#8c8c8c"/><rect x="519" y="5" width="1" height="1.5" fill="#909090"/><rect x="519" y="9" width="1" height="1.5" fill="#909090"/><rect x="528" y="0" width="1" height="2" fill="#8c8c8c"/><rect x="528" y="16" width="1" height="2" fill="#8c8c8c"/><rect x="538" y="5" width="1" height="1.5" fill="#909090"/><rect x="538" y="9" width="1" height="1.5" fill="#909090"/><rect x="547" y="0" width="1" height="2" fill="#8c8c8c"/><rect x="547" y="16" width="1" height="2" fill="#8c8c8c"/><rect x="556" y="5" width="1" height="1.5" fill="#909090"/><rect x="556" y="9" width="1" height="1.5" fill="#909090"/><rect x="565" y="0" width="1" height="2" fill="#8c8c8c"/><rect x="565" y="16" width="1" height="2" fill="#8c8c8c"/><rect x="575" y="5" width="1" height="1.5" fill="#909090"/><rect x="575" y="9" width="1" height="1.5" fill="#909090"/><rect x="584" y="0" width="1" height="2" fill="#8c8c8c"/><rect x="584" y="16" width="1" height="2" fill="#8c8c8c"/><rect x="593" y="5" width="1" height="2" fill="#ffffff"/><rect x="593" y="9" width="1" height="2" fill="#ffffff"/><rect x="602" y="0" width="1" height="2" fill="#a3a3a3"/><rect x="602" y="16" width="1" height="2" fill="#a3a3a3"/><rect x="612" y="5" width="1" height="2" fill="#ffffff"/><rect x="612" y="9" width="1" height="2" fill="#ffffff"/><rect x="621" y="0" width="1" height="2" fill="#a3a3a3"/><rect x="621" y="16" width="1" height="2" fill="#a3a3a3"/><rect x="630" y="5" width="1" height="2" fill="#ffffff"/><rect x="630" y="9" width="1" height="2" fill="#ffffff"/><rect x="639" y="0" width="1" height="2" fill="#a3a3a3"/><rect x="639" y="16" width="1" height="2" fill="#a3a3a3"/><rect x="649" y="5" width="1" height="2" fill="#ffffff"/><rect x="649" y="9" width="1" height="2" fill="#ffffff"/><rect x="658" y="0" width="1" height="2" fill="#a3a3a3"/><rect x="658" y="16" width="1" height="2" fill="#a3a3a3"/><rect x="667" y="5" width="1" height="2" fill="#ffffff"/><rect x="667" y="9" width="1" height="2" fill="#ffffff"/><rect x="676" y="0" width="1" height="2" fill="#a3a3a3"/><rect x="676" y="16" width="1" height="2" fill="#a3a3a3"/><rect x="686" y="5" width="1" height="2" fill="#ffffff"/><rect x="686" y="9" width="1" height="2" fill="#ffffff"/><rect x="695" y="0" width="1" height="2" fill="#a3a3a3"/><rect x="695" y="16" width="1" height="2" fill="#a3a3a3"/><rect x="704" y="5" width="1" height="2" fill="#ffffff"/><rect x="704" y="9" width="1" height="2" fill="#ffffff"/><rect x="714" y="0" width="1" height="2" fill="#a3a3a3"/><rect x="714" y="16" width="1" height="2" fill="#a3a3a3"/><rect x="723" y="5" width="1" height="2" fill="#ffffff"/><rect x="723" y="9" width="1" height="2" fill="#ffffff"/><rect x="732" y="0" width="1" height="2" fill="#a3a3a3"/><rect x="732" y="16" width="1" height="2" fill="#a3a3a3"/><rect x="741" y="5" width="1" height="2" fill="#ffffff"/><rect x="741" y="9" width="1" height="2" fill="#ffffff"/><rect x="751" y="0" width="1" height="2" fill="#a3a3a3"/><rect x="751" y="16" width="1" height="2" fill="#a3a3a3"/><rect x="760" y="5" width="1" height="2" fill="#ffffff"/><rect x="760" y="9" width="1" height="2" fill="#ffffff"/><rect x="769" y="0" width="1" height="2" fill="#a3a3a3"/><rect x="769" y="16" width="1" height="2" fill="#a3a3a3"/><rect x="778" y="5" width="1" height="2" fill="#ffffff"/><rect x="778" y="9" width="1" height="2" fill="#ffffff"/><rect x="788" y="0" width="1" height="2" fill="#a3a3a3"/><rect x="788" y="16" width="1" height="2" fill="#a3a3a3"/><rect x="797" y="5" width="1" height="2" fill="#ffffff"/><rect x="797" y="9" width="1" height="2" fill="#ffffff"/><rect x="806" y="0" width="1" height="2" fill="#a3a3a3"/><rect x="806" y="16" width="1" height="2" fill="#a3a3a3"/><rect x="815" y="5" width="1" height="2" fill="#ffffff"/><rect x="815" y="9" width="1" height="2" fill="#ffffff"/><rect x="825" y="0" width="1" height="2" fill="#a3a3a3"/><rect x="825" y="16" width="1" height="2" fill="#a3a3a3"/></svg>
<div style="left:242px;top:98px;width:826px;height:18px;overflow:hidden"><div style="left:-242px;top:-98px;width:1423px;height:200px"><span class="t" style="left:241.5px;width:20px;text-align:center;top:102.700px;font-size:9px;line-height:9px;color:#757575;letter-spacing:-0.600px">12</span><span class="t" style="left:260.0px;width:20px;text-align:center;top:102.700px;font-size:9px;line-height:9px;color:#757575;letter-spacing:-0.600px">11</span><span class="t" style="left:278.5px;width:20px;text-align:center;top:102.700px;font-size:9px;line-height:9px;color:#757575;letter-spacing:-0.600px">10</span><span class="t" style="left:297.0px;width:20px;text-align:center;top:102.700px;font-size:9px;line-height:9px;color:#757575;letter-spacing:-0.600px">9</span><span class="t" style="left:315.5px;width:20px;text-align:center;top:102.700px;font-size:9px;line-height:9px;color:#757575;letter-spacing:-0.600px">8</span><span class="t" style="left:334.1px;width:20px;text-align:center;top:102.700px;font-size:9px;line-height:9px;color:#757575;letter-spacing:-0.600px">7</span><span class="t" style="left:352.6px;width:20px;text-align:center;top:102.700px;font-size:9px;line-height:9px;color:#757575;letter-spacing:-0.600px">6</span><span class="t" style="left:371.1px;width:20px;text-align:center;top:102.700px;font-size:9px;line-height:9px;color:#757575;letter-spacing:-0.600px">5</span><span class="t" style="left:389.6px;width:20px;text-align:center;top:102.700px;font-size:9px;line-height:9px;color:#757575;letter-spacing:-0.600px">4</span><span class="t" style="left:408.1px;width:20px;text-align:center;top:102.700px;font-size:9px;line-height:9px;color:#757575;letter-spacing:-0.600px">3</span><span class="t" style="left:426.7px;width:20px;text-align:center;top:102.700px;font-size:9px;line-height:9px;color:#757575;letter-spacing:-0.600px">2</span><span class="t" style="left:445.2px;width:20px;text-align:center;top:102.700px;font-size:9px;line-height:9px;color:#757575;letter-spacing:-0.600px">1</span><span class="t" style="left:482.2px;width:20px;text-align:center;top:102.700px;font-size:9px;line-height:9px;color:#757575;letter-spacing:-0.600px">1</span><span class="t" style="left:500.7px;width:20px;text-align:center;top:102.700px;font-size:9px;line-height:9px;color:#757575;letter-spacing:-0.600px">2</span><span class="t" style="left:519.3px;width:20px;text-align:center;top:102.700px;font-size:9px;line-height:9px;color:#757575;letter-spacing:-0.600px">3</span><span class="t" style="left:537.8px;width:20px;text-align:center;top:102.700px;font-size:9px;line-height:9px;color:#757575;letter-spacing:-0.600px">4</span><span class="t" style="left:556.3px;width:20px;text-align:center;top:102.700px;font-size:9px;line-height:9px;color:#757575;letter-spacing:-0.600px">5</span><span class="t" style="left:574.8px;width:20px;text-align:center;top:102.700px;font-size:9px;line-height:9px;color:#757575;letter-spacing:-0.600px">6</span><span class="t" style="left:593.3px;width:20px;text-align:center;top:102.700px;font-size:9px;line-height:9px;color:#757575;letter-spacing:-0.600px">7</span><span class="t" style="left:611.9px;width:20px;text-align:center;top:102.700px;font-size:9px;line-height:9px;color:#757575;letter-spacing:-0.600px">8</span><span class="t" style="left:630.4px;width:20px;text-align:center;top:102.700px;font-size:9px;line-height:9px;color:#757575;letter-spacing:-0.600px">9</span><span class="t" style="left:648.9px;width:20px;text-align:center;top:102.700px;font-size:9px;line-height:9px;color:#757575;letter-spacing:-0.600px">10</span><span class="t" style="left:667.4px;width:20px;text-align:center;top:102.700px;font-size:9px;line-height:9px;color:#757575;letter-spacing:-0.600px">11</span><span class="t" style="left:685.9px;width:20px;text-align:center;top:102.700px;font-size:9px;line-height:9px;color:#757575;letter-spacing:-0.600px">12</span><span class="t" style="left:704.5px;width:20px;text-align:center;top:102.700px;font-size:9px;line-height:9px;color:#757575;letter-spacing:-0.600px">13</span><span class="t" style="left:723.0px;width:20px;text-align:center;top:102.700px;font-size:9px;line-height:9px;color:#757575;letter-spacing:-0.600px">14</span><span class="t" style="left:741.5px;width:20px;text-align:center;top:102.700px;font-size:9px;line-height:9px;color:#757575;letter-spacing:-0.600px">15</span><span class="t" style="left:760.0px;width:20px;text-align:center;top:102.700px;font-size:9px;line-height:9px;color:#757575;letter-spacing:-0.600px">16</span><span class="t" style="left:778.5px;width:20px;text-align:center;top:102.700px;font-size:9px;line-height:9px;color:#757575;letter-spacing:-0.600px">17</span><span class="t" style="left:797.1px;width:20px;text-align:center;top:102.700px;font-size:9px;line-height:9px;color:#757575;letter-spacing:-0.600px">18</span><span class="t" style="left:834.1px;width:20px;text-align:center;top:102.700px;font-size:9px;line-height:9px;color:#757575;letter-spacing:-0.600px">20</span><span class="t" style="left:852.6px;width:20px;text-align:center;top:102.700px;font-size:9px;line-height:9px;color:#757575;letter-spacing:-0.600px">21</span><span class="t" style="left:871.1px;width:20px;text-align:center;top:102.700px;font-size:9px;line-height:9px;color:#757575;letter-spacing:-0.600px">22</span><span class="t" style="left:889.7px;width:20px;text-align:center;top:102.700px;font-size:9px;line-height:9px;color:#757575;letter-spacing:-0.600px">23</span><span class="t" style="left:908.2px;width:20px;text-align:center;top:102.700px;font-size:9px;line-height:9px;color:#757575;letter-spacing:-0.600px">24</span><span class="t" style="left:926.7px;width:20px;text-align:center;top:102.700px;font-size:9px;line-height:9px;color:#757575;letter-spacing:-0.600px">25</span><span class="t" style="left:945.2px;width:20px;text-align:center;top:102.700px;font-size:9px;line-height:9px;color:#757575;letter-spacing:-0.600px">26</span><span class="t" style="left:963.7px;width:20px;text-align:center;top:102.700px;font-size:9px;line-height:9px;color:#757575;letter-spacing:-0.600px">27</span><span class="t" style="left:982.3px;width:20px;text-align:center;top:102.700px;font-size:9px;line-height:9px;color:#757575;letter-spacing:-0.600px">28</span><span class="t" style="left:1000.8px;width:20px;text-align:center;top:102.700px;font-size:9px;line-height:9px;color:#757575;letter-spacing:-0.600px">29</span><span class="t" style="left:1019.3px;width:20px;text-align:center;top:102.700px;font-size:9px;line-height:9px;color:#757575;letter-spacing:-0.600px">30</span><span class="t" style="left:1037.8px;width:20px;text-align:center;top:102.700px;font-size:9px;line-height:9px;color:#757575;letter-spacing:-0.600px">31</span><span class="t" style="left:1056.3px;width:20px;text-align:center;top:102.700px;font-size:9px;line-height:9px;color:#757575;letter-spacing:-0.600px">32</span><span class="t" style="left:815.6px;width:20px;text-align:center;top:102.700px;font-size:9px;line-height:9px;color:#757575;letter-spacing:-0.600px">19</span></div></div>
<svg style="left:467px;top:96px" width="16" height="22" viewBox="0 0 16 22" ><path d="M2.400 1.600H12.600Q13.400 1.600 13.400 2.400V4.200L1.600 17.600V19.400Q1.600 20.200 2.400 20.200H12.600Q13.400 20.200 13.400 19.400V17.600L1.600 4.200V2.400Q1.600 1.600 2.400 1.600Z" fill="#dfdfde" stroke="#555" stroke-width="1.200" stroke-linejoin="round"/></svg>
<svg style="left:819px;top:106px" width="16" height="12" viewBox="0 0 16 12" ><path d="M7.600 2.200l5.700 6v1.500q0 .8-.8.800h-9.800q-.8 0-.8-.8v-1.500z" fill="#dfdfde" stroke="#555" stroke-width="1.200" stroke-linejoin="round"/></svg>
<div style="left:223px;top:121px;width:18px;height:28px;background:#f0f0f0;border:1px solid #a3a3a3;border-top:none;border-radius:0 0 2px 2px"></div>
<div style="left:223px;top:148.5px;width:18px;height:513px;background:#fff"></div>
<div style="left:223px;top:661px;width:18px;height:36px;background:#f0f0f0;border:1px solid #a3a3a3;border-bottom:none"></div>
<svg style="left:223px;top:116px" width="18" height="581" viewBox="0 0 18 581" ><rect x="0" y="13" width="2" height="1" fill="#8c8c8c"/><rect x="16" y="13" width="2" height="1" fill="#8c8c8c"/><rect x="5" y="23" width="1.300" height="1" fill="#909090"/><rect x="9" y="23" width="1.300" height="1" fill="#909090"/><rect x="5" y="41" width="1.300" height="1" fill="#909090"/><rect x="9" y="41" width="1.300" height="1" fill="#909090"/><rect x="0" y="51" width="2" height="1" fill="#8c8c8c"/><rect x="16" y="51" width="2" height="1" fill="#8c8c8c"/><rect x="5" y="60" width="1.300" height="1" fill="#909090"/><rect x="9" y="60" width="1.300" height="1" fill="#909090"/><rect x="0" y="69" width="2" height="1" fill="#8c8c8c"/><rect x="16" y="69" width="2" height="1" fill="#8c8c8c"/><rect x="5" y="78" width="1.300" height="1" fill="#909090"/><rect x="9" y="78" width="1.300" height="1" fill="#909090"/><rect x="0" y="88" width="2" height="1" fill="#8c8c8c"/><rect x="16" y="88" width="2" height="1" fill="#8c8c8c"/><rect x="5" y="97" width="1.300" height="1" fill="#909090"/><rect x="9" y="97" width="1.300" height="1" fill="#909090"/><rect x="0" y="106" width="2" height="1" fill="#8c8c8c"/><rect x="16" y="106" width="2" height="1" fill="#8c8c8c"/><rect x="5" y="115" width="1.300" height="1" fill="#909090"/><rect x="9" y="115" width="1.300" height="1" fill="#909090"/><rect x="0" y="125" width="2" height="1" fill="#8c8c8c"/><rect x="16" y="125" width="2" height="1" fill="#8c8c8c"/><rect x="5" y="134" width="1.300" height="1" fill="#909090"/><rect x="9" y="134" width="1.300" height="1" fill="#909090"/><rect x="0" y="143" width="2" height="1" fill="#8c8c8c"/><rect x="16" y="143" width="2" height="1" fill="#8c8c8c"/><rect x="5" y="152" width="1.300" height="1" fill="#909090"/><rect x="9" y="152" width="1.300" height="1" fill="#909090"/><rect x="0" y="162" width="2" height="1" fill="#8c8c8c"/><rect x="16" y="162" width="2" height="1" fill="#8c8c8c"/><rect x="5" y="171" width="1.300" height="1" fill="#909090"/><rect x="9" y="171" width="1.300" height="1" fill="#909090"/><rect x="0" y="180" width="2" height="1" fill="#8c8c8c"/><rect x="16" y="180" width="2" height="1" fill="#8c8c8c"/><rect x="5" y="189" width="1.300" height="1" fill="#909090"/><rect x="9" y="189" width="1.300" height="1" fill="#909090"/><rect x="0" y="199" width="2" height="1" fill="#8c8c8c"/><rect x="16" y="199" width="2" height="1" fill="#8c8c8c"/><rect x="5" y="208" width="1.300" height="1" fill="#909090"/><rect x="9" y="208" width="1.300" height="1" fill="#909090"/><rect x="0" y="217" width="2" height="1" fill="#8c8c8c"/><rect x="16" y="217" width="2" height="1" fill="#8c8c8c"/><rect x="5" y="226" width="1.300" height="1" fill="#909090"/><rect x="9" y="226" width="1.300" height="1" fill="#909090"/><rect x="0" y="236" width="2" height="1" fill="#8c8c8c"/><rect x="16" y="236" width="2" height="1" fill="#8c8c8c"/><rect x="5" y="245" width="1.300" height="1" fill="#909090"/><rect x="9" y="245" width="1.300" height="1" fill="#909090"/><rect x="0" y="254" width="2" height="1" fill="#8c8c8c"/><rect x="16" y="254" width="2" height="1" fill="#8c8c8c"/><rect x="5" y="264" width="1.300" height="1" fill="#909090"/><rect x="9" y="264" width="1.300" height="1" fill="#909090"/><rect x="0" y="273" width="2" height="1" fill="#8c8c8c"/><rect x="16" y="273" width="2" height="1" fill="#8c8c8c"/><rect x="5" y="282" width="1.300" height="1" fill="#909090"/><rect x="9" y="282" width="1.300" height="1" fill="#909090"/><rect x="0" y="291" width="2" height="1" fill="#8c8c8c"/><rect x="16" y="291" width="2" height="1" fill="#8c8c8c"/><rect x="5" y="301" width="1.300" height="1" fill="#909090"/><rect x="9" y="301" width="1.300" height="1" fill="#909090"/><rect x="0" y="310" width="2" height="1" fill="#8c8c8c"/><rect x="16" y="310" width="2" height="1" fill="#8c8c8c"/><rect x="5" y="319" width="1.300" height="1" fill="#909090"/><rect x="9" y="319" width="1.300" height="1" fill="#909090"/><rect x="0" y="328" width="2" height="1" fill="#8c8c8c"/><rect x="16" y="328" width="2" height="1" fill="#8c8c8c"/><rect x="5" y="338" width="1.300" height="1" fill="#909090"/><rect x="9" y="338" width="1.300" height="1" fill="#909090"/><rect x="0" y="347" width="2" height="1" fill="#8c8c8c"/><rect x="16" y="347" width="2" height="1" fill="#8c8c8c"/><rect x="5" y="356" width="1.300" height="1" fill="#909090"/><rect x="9" y="356" width="1.300" height="1" fill="#909090"/><rect x="0" y="365" width="2" height="1" fill="#8c8c8c"/><rect x="16" y="365" width="2" height="1" fill="#8c8c8c"/><rect x="5" y="375" width="1.300" height="1" fill="#909090"/><rect x="9" y="375" width="1.300" height="1" fill="#909090"/><rect x="0" y="384" width="2" height="1" fill="#8c8c8c"/><rect x="16" y="384" width="2" height="1" fill="#8c8c8c"/><rect x="5" y="393" width="1.300" height="1" fill="#909090"/><rect x="9" y="393" width="1.300" height="1" fill="#909090"/><rect x="0" y="402" width="2" height="1" fill="#8c8c8c"/><rect x="16" y="402" width="2" height="1" fill="#8c8c8c"/><rect x="5" y="412" width="1.300" height="1" fill="#909090"/><rect x="9" y="412" width="1.300" height="1" fill="#909090"/><rect x="0" y="421" width="2" height="1" fill="#8c8c8c"/><rect x="16" y="421" width="2" height="1" fill="#8c8c8c"/><rect x="5" y="430" width="1.300" height="1" fill="#909090"/><rect x="9" y="430" width="1.300" height="1" fill="#909090"/><rect x="0" y="439" width="2" height="1" fill="#8c8c8c"/><rect x="16" y="439" width="2" height="1" fill="#8c8c8c"/><rect x="5" y="449" width="1.300" height="1" fill="#909090"/><rect x="9" y="449" width="1.300" height="1" fill="#909090"/><rect x="0" y="458" width="2" height="1" fill="#8c8c8c"/><rect x="16" y="458" width="2" height="1" fill="#8c8c8c"/><rect x="5" y="467" width="1.300" height="1" fill="#909090"/><rect x="9" y="467" width="1.300" height="1" fill="#909090"/><rect x="0" y="476" width="2" height="1" fill="#8c8c8c"/><rect x="16" y="476" width="2" height="1" fill="#8c8c8c"/><rect x="5" y="486" width="1.300" height="1" fill="#909090"/><rect x="9" y="486" width="1.300" height="1" fill="#909090"/><rect x="0" y="495" width="2" height="1" fill="#8c8c8c"/><rect x="16" y="495" width="2" height="1" fill="#8c8c8c"/><rect x="5" y="504" width="1.300" height="1" fill="#909090"/><rect x="9" y="504" width="1.300" height="1" fill="#909090"/><rect x="0" y="514" width="2" height="1" fill="#8c8c8c"/><rect x="16" y="514" width="2" height="1" fill="#8c8c8c"/><rect x="5" y="523" width="1.300" height="1" fill="#909090"/><rect x="9" y="523" width="1.300" height="1" fill="#909090"/><rect x="0" y="532" width="2" height="1" fill="#8c8c8c"/><rect x="16" y="532" width="2" height="1" fill="#8c8c8c"/><rect x="5" y="541" width="1.300" height="1" fill="#909090"/><rect x="9" y="541" width="1.300" height="1" fill="#909090"/><rect x="0" y="551" width="2" height="1" fill="#8c8c8c"/><rect x="16" y="551" width="2" height="1" fill="#8c8c8c"/><rect x="5" y="560" width="1.300" height="1" fill="#909090"/><rect x="9" y="560" width="1.300" height="1" fill="#909090"/><rect x="0" y="569" width="2" height="1" fill="#8c8c8c"/><rect x="16" y="569" width="2" height="1" fill="#8c8c8c"/><rect x="5" y="578" width="1.300" height="1" fill="#909090"/><rect x="9" y="578" width="1.300" height="1" fill="#909090"/></svg>
<div style="left:456px;top:129px;width:390px;height:551px;background:#fff;box-shadow:0 0 0 1px #8b8b8b inset, 0.500px 1.500px 5px 0.500px rgba(0,0,0,.55)"></div>
<svg style="left:470px;top:143px" width="362" height="523" viewBox="0 0 362 523" ><rect x="4.900" y="4.900" width="351.700" height="513.100" fill="none" stroke="#d3d3d3" stroke-width="1.300"/></svg>
<svg style="left:457px;top:130px" width="389" height="550" viewBox="0 0 389 550" ><g transform="translate(-457,-130)"><ellipse cx="574" cy="256.200" rx="49.2" ry="42" fill="#729fcf" stroke="#3465a4" stroke-width="1"/><rect x="658" y="257" width="141.500" height="122.500" fill="#729fcf" stroke="#3465a4" stroke-width="1"/><path d="M548.8 382.0C548.6 386.2 547.2 397.5 547.7 407.0C548.2 416.5 549.5 429.4 552.0 439.0C554.5 448.6 558.5 457.1 562.6 464.5C566.7 471.9 571.5 479.1 576.5 483.7C581.5 488.3 587.0 490.0 592.5 492.2C598.0 494.4 604.5 495.8 609.5 497.1C614.5 498.4 618.7 500.1 622.3 500.0C625.9 499.9 628.8 498.9 630.9 496.5C633.0 494.1 633.6 489.7 635.0 485.8C636.4 481.9 636.9 476.7 639.4 473.0C641.9 469.3 645.7 465.8 650.0 463.4C654.3 461.0 660.4 459.5 665.0 458.5C669.6 457.5 673.9 457.1 677.8 457.2C681.7 457.3 685.3 458.5 688.4 459.0C691.5 459.5 695.1 460.0 696.5 460.2" fill="none" stroke="#222" stroke-width="1"/></g></svg>
<div style="left:1068px;top:95px;width:17px;height:619px;background:#f0f0f0"></div>
<div style="left:1068px;top:95px;width:1px;height:602px;background:#fcfcfc"></div>
<div style="left:1069px;top:249px;width:15px;height:297px;background:#cdcdcd"></div>
<svg style="left:1068px;top:95px" width="17" height="20" viewBox="0 0 17 20" ><path d="M5.300 10.700l3.200-3.500 3.200 3.500" fill="none" stroke="#404040" stroke-width="1.800"/></svg>
<svg style="left:1068px;top:679px" width="17" height="20" viewBox="0 0 17 20" ><path d="M5.300 7.500l3.200 3.500 3.200-3.500" fill="none" stroke="#404040" stroke-width="1.800"/></svg>
<div style="left:218px;top:697px;width:867px;height:17px;background:#f0f0f0"></div>
<div style="left:218px;top:697px;width:850px;height:1px;background:#fcfcfc"></div>
<div style="left:360px;top:698px;width:574px;height:15px;background:#cdcdcd"></div>
<svg style="left:222px;top:697px" width="17" height="17" viewBox="0 0 17 17" ><path d="M7.600 4.800l-4 3.700 4 3.700" fill="none" stroke="#404040" stroke-width="2"/></svg>
<svg style="left:1050px;top:697px" width="17" height="17" viewBox="0 0 17 17" ><path d="M7.5 5l4 3.5-4 3.5" fill="none" stroke="#404040" stroke-width="2"/></svg>
<div style="left:218px;top:714px;width:867px;height:16px;background:#f0f0f0"></div>
<div style="left:301px;top:714px;width:783px;height:1px;background:#666"></div>
<svg style="left:228px;top:715px" width="60" height="14" viewBox="0 0 60 14" ><g fill="#a8a8a8"><path d="M3.300 3h1.200v7.500H3.300zM8.300 3v7.500L4.500 6.750z"/><path d="M23 3v7.500l-4-3.750z"/><path d="M33 3v7.500l4-3.750z"/><path d="M49 3v7.500l3.800-3.750zM52.800 3H54v7.500h-1.200z"/></g></svg>
<div style="left:301px;top:714px;width:72px;height:16px;background:#fff;border-left:1px solid #444;border-right:1px solid #555;border-top:1px solid #666"></div>
<div style="left:373px;top:715px;width:146px;height:15px;background:#f0f0f0;border-right:1px solid #555;border-bottom:1px solid #666;box-shadow:inset 1px 0 0 #fff"></div>
<div style="left:519px;top:715px;width:121px;height:15px;background:#f0f0f0;border-right:1px solid #555;border-bottom:1px solid #666;box-shadow:inset 1px 0 0 #fff"></div>
<span class="t" id="t13" style="left:312.2px;top:716.71px;font-size:10.5px;line-height:10.5px;font-weight:700;color:#000;letter-spacing:0.025px;">Разметка</span>
<span class="t" id="t14" style="left:387.5px;top:716.71px;font-size:10.5px;line-height:10.5px;font-weight:400;color:#000;letter-spacing:0.149px;">Элементы управления</span>
<span class="t" id="t15" style="left:533.2px;top:716.71px;font-size:10.5px;line-height:10.5px;font-weight:400;color:#000;letter-spacing:0.139px;">Размерные линии</span>
<div style="left:1085px;top:96px;width:1px;height:632px;background:#8a8a8a"></div>
<div style="left:1086px;top:95px;width:5px;height:633px;background:#f0f0f0"></div>
<div style="left:1086px;top:95px;width:1px;height:633px;background:#fff"></div>
<div style="left:1091px;top:96px;width:1px;height:632px;background:#a0a0a0"></div>
<div style="left:1085px;top:375px;width:7px;height:73px;background:#6e6e6e"></div>
<svg style="left:1084.5px;top:405.5px" width="8" height="12" viewBox="0 0 8 12" ><path d="M2 2v8l4-4z" fill="#fff"/></svg>
<div style="left:1092px;top:95px;width:293px;height:633px;background:#f0f0f0"></div>
<div style="left:1092px;top:95px;width:1px;height:633px;background:#fff"></div>
<div style="left:1096px;top:97px;width:288px;height:1px;background:#fafafa"></div>
<div style="left:1095px;top:97px;width:1px;height:629px;background:#f8f8f8"></div>
<div style="left:1384px;top:97px;width:1px;height:629px;background:#fafafa"></div>
<div style="left:1096px;top:726px;width:289px;height:1px;background:#fafafa"></div>
<div style="left:1096px;top:98px;width:288px;height:628px;background:#f0f0f0"></div>
<div style="left:1096px;top:125px;width:288px;height:25px;background:linear-gradient(#e1e1e1,#ededed 60%,#f0f0f0)"></div>
<svg style="left:1100px;top:104px" width="4" height="16" viewBox="0 0 4 16" ><g fill="#777"><rect x="1" y="1" width="2" height="2"/><rect x="1" y="5" width="2" height="2"/><rect x="1" y="9" width="2" height="2"/><rect x="1" y="13" width="2" height="2"/></g></svg>
<span class="t" id="t16" style="left:1109.5px;top:107.14px;font-size:12px;line-height:12px;font-weight:700;color:#000;letter-spacing:-0.531px;">Свойства</span>
<svg style="left:1369px;top:105px" width="10" height="10" viewBox="0 0 10 10" ><path d="M1 1l8 8M9 1l-8 8" stroke="#444" stroke-width="1"/></svg>
<svg style="left:1101px;top:134px" width="14" height="10" viewBox="0 0 14 10" ><path d="M1.5 8.500l5.500-6 5.500 6" fill="none" stroke="#555" stroke-width="1.1"/></svg>
<span class="t" id="t17" style="left:1117.8px;top:133.54px;font-size:12px;line-height:12px;font-weight:700;color:#000;letter-spacing:-0.484px;">Страница</span>
<svg style="left:1367px;top:131px" width="11" height="11" viewBox="0 0 11 11" ><rect x="1" y="1" width="9.500" height="9.500" fill="#f6f6f6"/><path d="M1.500 10.500v-9h9" fill="none" stroke="#6a6a6a" stroke-width="1"/><path d="M10.500 3v7.500h-7.500z" fill="#555"/><path d="M4 4l3.500 3.500" stroke="#555" stroke-width="1"/></svg>
<span class="t" id="t18" style="left:1168.1px;top:164.34px;font-size:12px;line-height:12px;font-weight:400;color:#000;letter-spacing:-0.281px;"><u>Ф</u>ормат:</span>
<div style="left:1219px;top:158px;width:150px;height:23px;background:#fff;border:1px solid #8a8f96"></div>
<div style="left:1351px;top:159px;width:17px;height:21px;background:#e1e1e1;border:1px solid #adadad"></div>
<svg style="left:1353px;top:165px" width="12" height="9" viewBox="0 0 12 9" ><path d="M2 2.500l4 4 4-4" fill="none" stroke="#3c3c3c" stroke-width="1.100"/></svg>
<span class="t" id="t19" style="left:1220.8px;top:164.14px;font-size:12px;line-height:12px;font-weight:400;color:#000;letter-spacing:-0.594px;">A4</span>
<span class="t" id="t20" style="left:1143.3px;top:193.34px;font-size:12px;line-height:12px;font-weight:400;color:#000;letter-spacing:-0.243px;"><u>О</u>риентация:</span>
<div style="left:1219px;top:187px;width:150px;height:23px;background:#fff;border:1px solid #8a8f96"></div>
<div style="left:1351px;top:188px;width:17px;height:21px;background:#e1e1e1;border:1px solid #adadad"></div>
<svg style="left:1353px;top:194px" width="12" height="9" viewBox="0 0 12 9" ><path d="M2 2.500l4 4 4-4" fill="none" stroke="#3c3c3c" stroke-width="1.100"/></svg>
<span class="t" id="t21" style="left:1220.8px;top:193.14px;font-size:12px;line-height:12px;font-weight:400;color:#000;letter-spacing:-0.037px;">Книжная</span>
<span class="t" id="t22" style="left:1187.1px;top:222.34px;font-size:12px;line-height:12px;font-weight:400;color:#000;letter-spacing:-0.195px;">Фо<u>н</u>:</span>
<div style="left:1219px;top:216px;width:150px;height:23px;background:#fff;border:1px solid #8a8f96"></div>
<div style="left:1351px;top:217px;width:17px;height:21px;background:#e1e1e1;border:1px solid #adadad"></div>
<svg style="left:1353px;top:223px" width="12" height="9" viewBox="0 0 12 9" ><path d="M2 2.500l4 4 4-4" fill="none" stroke="#3c3c3c" stroke-width="1.100"/></svg>
<span class="t" id="t23" style="left:1220.8px;top:222.14px;font-size:12px;line-height:12px;font-weight:400;color:#000;letter-spacing:-0.379px;">Нет</span>
<div style="left:1220px;top:246px;width:148px;height:28px;background:#e1e1e1;border:1px solid #adadad"></div>
<span class="t" id="t24" style="left:1230.5px;top:254.84px;font-size:12px;line-height:12px;font-weight:400;color:#000;letter-spacing:-0.155px;"><u>В</u>ставить изображение</span>
<span class="t" id="t25" style="left:1172.2px;top:287.34px;font-size:12px;line-height:12px;font-weight:400;color:#000;letter-spacing:-0.325px;">Отст<u>у</u>п:</span>
<div style="left:1219px;top:281px;width:150px;height:23px;background:#fff;border:1px solid #8a8f96"></div>
<div style="left:1351px;top:282px;width:17px;height:21px;background:#e1e1e1;border:1px solid #adadad"></div>
<svg style="left:1353px;top:288px" width="12" height="9" viewBox="0 0 12 9" ><path d="M2 2.500l4 4 4-4" fill="none" stroke="#3c3c3c" stroke-width="1.100"/></svg>
<span class="t" id="t26" style="left:1220.8px;top:287.14px;font-size:12px;line-height:12px;font-weight:400;color:#000;letter-spacing:-0.145px;">Обычно 0.75&quot;</span>
<span class="t" id="t27" style="left:1113.1px;top:316.34px;font-size:12px;line-height:12px;font-weight:400;color:#000;letter-spacing:-0.099px;">Мастер-страница:</span>
<div style="left:1219px;top:310px;width:150px;height:23px;background:#fff;border:1px solid #8a8f96"></div>
<div style="left:1351px;top:311px;width:17px;height:21px;background:#e1e1e1;border:1px solid #adadad"></div>
<svg style="left:1353px;top:317px" width="12" height="9" viewBox="0 0 12 9" ><path d="M2 2.500l4 4 4-4" fill="none" stroke="#3c3c3c" stroke-width="1.100"/></svg>
<span class="t" id="t28" style="left:1220.8px;top:316.14px;font-size:12px;line-height:12px;font-weight:400;color:#000;letter-spacing:0.079px;">Обычный</span>
<div style="left:1219px;top:340px;width:13px;height:13px;background:#fff;border:1px solid #333"></div>
<svg style="left:1219px;top:340px" width="13" height="13" viewBox="0 0 13 13" ><path d="M3 6.500l2.500 2.800 4.800-5.600" fill="none" stroke="#222" stroke-width="1.2"/></svg>
<span class="t" id="t29" style="left:1236.1px;top:341.84px;font-size:12px;line-height:12px;font-weight:400;color:#000;letter-spacing:-0.325px;">Фон <u>м</u>астера</span>
<div style="left:1219px;top:362px;width:13px;height:13px;background:#fff;border:1px solid #333"></div>
<svg style="left:1219px;top:362px" width="13" height="13" viewBox="0 0 13 13" ><path d="M3 6.500l2.500 2.800 4.800-5.600" fill="none" stroke="#222" stroke-width="1.2"/></svg>
<span class="t" id="t30" style="left:1236.1px;top:364.04px;font-size:12px;line-height:12px;font-weight:400;color:#000;letter-spacing:-0.289px;">Об<u>ъ</u>екты мастера</span>
<div style="left:1220px;top:384px;width:148px;height:28px;background:#e1e1e1;border:1px solid #adadad"></div>
<svg style="left:1240px;top:390px" width="19" height="18" viewBox="0 0 19 18" ><rect x="1.500" y="2.500" width="14" height="11" rx="1" fill="#fff" stroke="#4a7fc0" stroke-width="1"/><path d="M8 15l1.500-3.500 6-6 2 2-6 6z" fill="#f0c27a"/><path d="M8 15l1.500-3.500 2 2z" fill="#999"/></svg>
<span class="t" id="t31" style="left:1260.5px;top:393.24px;font-size:12px;line-height:12px;font-weight:400;color:#000;letter-spacing:-0.266px;"><u>Р</u>ежим мастера</span>
<div style="left:1385px;top:95px;width:38px;height:634px;background:#f0f0f0"></div>
<svg style="left:1393px;top:103px" width="22" height="22" viewBox="0 0 22 22" ><path d="M9.27 3.80L9.72 1.49L12.28 1.49L12.73 3.80L14.87 4.69L16.82 3.37L18.63 5.18L17.31 7.13L18.20 9.27L20.51 9.72L20.51 12.28L18.20 12.73L17.31 14.87L18.63 16.82L16.82 18.63L14.87 17.31L12.73 18.20L12.28 20.51L9.72 20.51L9.27 18.20L7.13 17.31L5.18 18.63L3.37 16.82L4.69 14.87L3.80 12.73L1.49 12.28L1.49 9.72L3.80 9.27L4.69 7.13L3.37 5.18L5.18 3.37L7.13 4.69z" fill="#fafafa" stroke="#7a7a7a" stroke-width="1.100" stroke-linejoin="round"/><circle cx="11" cy="11" r="3.400" fill="#f0f0f0" stroke="#7a7a7a" stroke-width="1.100"/></svg>
<div style="left:1393px;top:133px;width:22px;height:1px;background:#d2d2d2"></div>
<div style="left:1388px;top:137px;width:32px;height:32px;background:#f1f1f1;border:1px solid #b4b4b4;border-radius:4px"></div>
<svg style="left:1393px;top:142px" width="22" height="22" viewBox="0 0 22 22" ><rect x="1.500" y="1.500" width="19" height="19" fill="#fff" stroke="#7a7a7a" stroke-width="1.100"/><rect x="1" y="1" width="20" height="3.800" fill="#7a7a7a"/><path d="M5 10.400h12M5 14.400h12" stroke="#7a7a7a" stroke-width="1"/><circle cx="12.300" cy="10.400" r="1.600" fill="#7a7a7a"/><circle cx="9.300" cy="14.400" r="1.300" fill="#c3d6ee" stroke="#5a8ac6" stroke-width=".8"/></svg>
<svg style="left:1393px;top:177px" width="22" height="22" viewBox="0 0 22 22" ><path d="M11 1.300l9.800 9.700-9.800 9.700-9.800-9.700z" fill="#fff" stroke="#7a7a7a" stroke-width="1.200" stroke-linejoin="round"/></svg>
<svg style="left:1392px;top:209px" width="24" height="26" viewBox="0 0 24 26" ><text x="2.400" y="19.600" font-family="Liberation Sans, sans-serif" font-size="22" fill="#7a7a7a" textLength="12" lengthAdjust="spacingAndGlyphs">A</text><text x="6.400" y="21" font-family="Liberation Sans, sans-serif" font-size="21" font-weight="700" fill="#3d7cc2" textLength="14.800" lengthAdjust="spacingAndGlyphs">A</text><path d="M5 23h17" stroke="#3d7cc2" stroke-width="1.200"/></svg>
<svg style="left:1393px;top:247px" width="22" height="22" viewBox="0 0 22 22" ><rect x="1.500" y="1.400" width="19" height="19" fill="#fff" stroke="#7a7a7a" stroke-width="1.100"/><circle cx="6.300" cy="6.300" r="2.400" fill="#efc07c"/><path d="M2 20v-2.500l5.500-5 2.500 2 4.500-4 6 5.500v4z" fill="#3d7cc2"/></svg>
<svg style="left:1393px;top:282px" width="22" height="22" viewBox="0 0 22 22" ><circle cx="10.800" cy="10.600" r="9.600" fill="#fff" stroke="#7a7a7a" stroke-width="1.100"/><path d="M15.800 5.800l-2.600 7.400-7.400 2.600 2.600-7.400z" fill="#3d7cc2"/><circle cx="10.800" cy="10.600" r="1.500" fill="#fff"/></svg>
<div style="left:0px;top:728px;width:1423px;height:3px;background:#f0f0f0"></div>
<div style="left:48px;top:728px;width:170px;height:1px;background:#9a9a9a"></div>
<div style="left:1085px;top:728px;width:338px;height:1px;background:#9a9a9a"></div>
<div style="left:0px;top:729px;width:1423px;height:1px;background:#fbfbfb"></div>
<div style="left:0px;top:730px;width:1423px;height:1px;background:#a3a3a3"></div>
<div style="left:0px;top:731px;width:1423px;height:19px;background:#f0f0f0"></div>
<div style="left:373px;top:729px;width:267px;height:1px;background:#666"></div>
<div style="left:301px;top:729px;width:1px;height:1px;background:#444"></div>
<div style="left:302px;top:729px;width:70px;height:1px;background:#fff"></div>
<div style="left:372px;top:729px;width:1px;height:1px;background:#555"></div>
<div style="left:141px;top:733px;width:1px;height:16px;background:#a0a0a0"></div>
<div style="left:533px;top:733px;width:1px;height:16px;background:#a0a0a0"></div>
<div style="left:774px;top:733px;width:1px;height:16px;background:#a0a0a0"></div>
<div style="left:1160px;top:733px;width:1px;height:16px;background:#a0a0a0"></div>
<div style="left:1183px;top:733px;width:1px;height:16px;background:#a0a0a0"></div>
<div style="left:1213px;top:733px;width:1px;height:16px;background:#a0a0a0"></div>
<div style="left:1236px;top:733px;width:1px;height:16px;background:#a0a0a0"></div>
<div style="left:1380px;top:733px;width:1px;height:16px;background:#a0a0a0"></div>
<span class="t" id="t32" style="left:10.9px;top:736.84px;font-size:12px;line-height:12px;font-weight:400;color:#000;letter-spacing:-0.626px;">Слайд 1 из 1</span>
<span class="t" id="t33" style="left:542.5px;top:736.84px;font-size:12px;line-height:12px;font-weight:400;color:#000;letter-spacing:0.179px;">Обычный</span>
<span class="t" id="t34" style="left:805.0px;top:736.84px;font-size:12px;line-height:12px;font-weight:400;color:#000;letter-spacing:-0.345px;">-7,86 / 17,63</span>
<span class="t" id="t35" style="left:994.8px;top:736.84px;font-size:12px;line-height:12px;font-weight:400;color:#000;letter-spacing:-0.563px;">0,00 x 0,00</span>
<span class="t" id="t36" style="left:1388.8px;top:736.84px;font-size:12px;line-height:12px;font-weight:400;color:#000;letter-spacing:-0.740px;">49 %</span>
<svg style="left:783px;top:732px" width="18" height="14" viewBox="0 0 18 14" ><rect x="5.500" y="5.500" width="10" height="6.500" fill="#fff" stroke="#7a7a7a" stroke-width="1"/><path d="M3.500 1v5M1 3.500h5" stroke="#3d7cc2" stroke-width="1"/></svg>
<svg style="left:973px;top:732px" width="18" height="14" viewBox="0 0 18 14" ><rect x="5.500" y="5.500" width="10" height="6.500" fill="#fff" stroke="#7a7a7a" stroke-width="1"/><path d="M5.500 2.500h10M5.500 0.800v3.400M15.500 0.800v3.400M2.500 5.500v6.500M1 5.500h3M1 12h3" stroke="#3d7cc2" stroke-width="1" fill="none"/></svg>
<svg style="left:1167px;top:735px" width="12" height="12" viewBox="0 0 12 12" ><path d="M1.500 1.500h7l2 2v7h-9z" fill="#fbeaec" stroke="#e0727d" stroke-width="1"/><rect x="3.500" y="1.500" width="4.500" height="3" fill="#fff" stroke="#e0727d" stroke-width=".9"/><rect x="3.500" y="7" width="5" height="3.500" fill="#fff" stroke="#e0727d" stroke-width=".9"/></svg>
<svg style="left:1217px;top:733px" width="16" height="16" viewBox="0 0 16 16" ><circle cx="8" cy="8" r="4.300" fill="none" stroke="#3d7cc2" stroke-width="1"/><path d="M8 .8v14.400M.8 8h14.400M6.500 2.300l1.500-1.500 1.500 1.500M6.500 13.700l1.500 1.500 1.500-1.500M2.300 6.500l-1.500 1.500 1.500 1.500M13.700 6.500l1.500 1.500-1.500 1.500" fill="none" stroke="#3d7cc2" stroke-width="1"/></svg>
<div style="left:1246px;top:741px;width:10px;height:2px;background:#333"></div>
<div style="left:1261px;top:742px;width:98px;height:1px;background:#555"></div>
<div style="left:1281px;top:736px;width:4px;height:12px;background:#444;border-radius:1px"></div>
<div style="left:1308px;top:738px;width:2px;height:8px;background:#666"></div>
<div style="left:1364px;top:741px;width:10px;height:2px;background:#333"></div>
<div style="left:1368px;top:737px;width:2px;height:10px;background:#333"></div>
<div style="left:48px;top:94px;width:170px;height:1px;background:#9a9a9a"></div>
<div style="left:48px;top:95px;width:170px;height:1px;background:#fff"></div>
<div style="left:1085px;top:94px;width:338px;height:1px;background:#9a9a9a"></div>
<div style="left:1085px;top:95px;width:338px;height:1px;background:#fff"></div>
</body></html>
